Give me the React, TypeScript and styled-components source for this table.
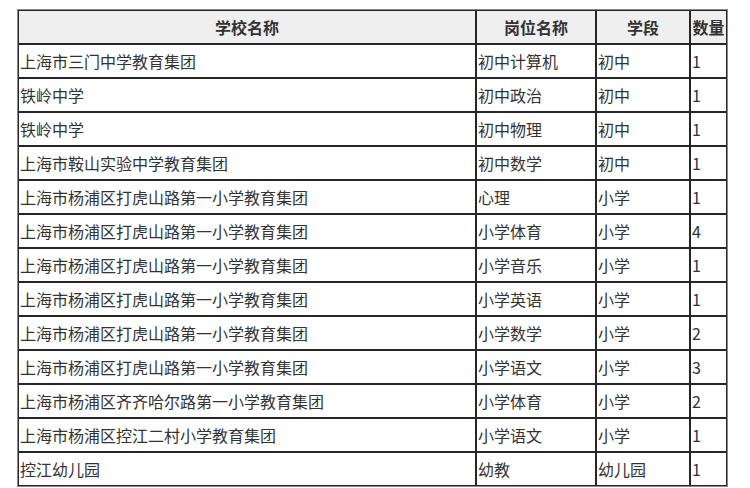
import styled, { createGlobalStyle } from 'styled-components';

const GlobalStyle = createGlobalStyle`
  html, body {
    margin: 0;
    padding: 0;
    background: #ffffff;
  }
  body {
    font-family: "Noto Sans CJK SC", "Noto Sans", sans-serif;
  }
`;

const Page = styled.div`
  padding: 9px 0 0 17px;
`;

const Table = styled.table`
  border: 1px solid #8a8a8a;
  border-spacing: 0;
  table-layout: fixed;
  width: 711px;
  font-size: 16px;
  color: #333333;
`;

const HeadCell = styled.th<{ width: number }>`
  box-sizing: border-box;
  width: ${(p) => p.width}px;
  height: 34px;
  padding: 0 1px;
  border: 1px solid #262626;
  background: #efefef;
  font-weight: bold;
  text-align: center;
  white-space: nowrap;
  overflow: hidden;
`;

const Cell = styled.td`
  box-sizing: border-box;
  height: 34px;
  padding: 0 1px;
  border: 1px solid #262626;
  text-align: left;
  white-space: nowrap;
  overflow: hidden;
`;

const rows: [string, string, string, string][] = [
  ['上海市三门中学教育集团', '初中计算机', '初中', '1'],
  ['铁岭中学', '初中政治', '初中', '1'],
  ['铁岭中学', '初中物理', '初中', '1'],
  ['上海市鞍山实验中学教育集团', '初中数学', '初中', '1'],
  ['上海市杨浦区打虎山路第一小学教育集团', '心理', '小学', '1'],
  ['上海市杨浦区打虎山路第一小学教育集团', '小学体育', '小学', '4'],
  ['上海市杨浦区打虎山路第一小学教育集团', '小学音乐', '小学', '1'],
  ['上海市杨浦区打虎山路第一小学教育集团', '小学英语', '小学', '1'],
  ['上海市杨浦区打虎山路第一小学教育集团', '小学数学', '小学', '2'],
  ['上海市杨浦区打虎山路第一小学教育集团', '小学语文', '小学', '3'],
  ['上海市杨浦区齐齐哈尔路第一小学教育集团', '小学体育', '小学', '2'],
  ['上海市杨浦区控江二村小学教育集团', '小学语文', '小学', '1'],
  ['控江幼儿园', '幼教', '幼儿园', '1'],
];

export default function App() {
  return (
    <>
      <GlobalStyle />
      <Page>
        <Table>
          <thead>
            <tr>
              <HeadCell width={458}>学校名称</HeadCell>
              <HeadCell width={120}>岗位名称</HeadCell>
              <HeadCell width={94}>学段</HeadCell>
              <HeadCell width={37}>数量</HeadCell>
            </tr>
          </thead>
          <tbody>
            {rows.map((r, i) => (
              <tr key={i}>
                {r.map((c, j) => (
                  <Cell key={j}>{c}</Cell>
                ))}
              </tr>
            ))}
          </tbody>
        </Table>
      </Page>
    </>
  );
}
